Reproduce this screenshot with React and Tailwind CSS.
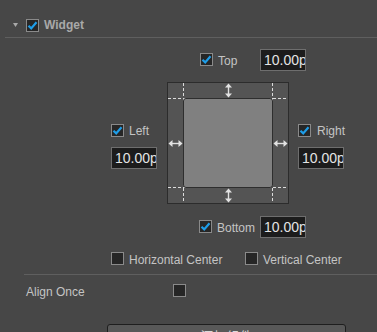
import React from "react"

function Check({ checked }) {
    return (
        <span className="w-[13px] h-[13px] shrink-0 border border-[#8a8a8a] bg-[#262626] flex items-center justify-center">
            {checked && (
                <svg width="11" height="11" viewBox="0 0 11 11">
                    <path d="M1.5 5.8 L4.2 8.4 L9.5 2.3" fill="none" stroke="#1e9de8" strokeWidth="2.2" />
                </svg>
            )}
        </span>
    )
}

function ValueBox() {
    return (
        <div className="w-[46px] h-[22px] border border-[#6e6e6e] bg-[#1c1c1c] overflow-hidden flex items-center pl-[3px] text-[14px] text-[#e4e4e4] whitespace-nowrap leading-none">
            10.00px
        </div>
    )
}

function Label({ children }) {
    return <span className="text-[12px] text-[#c4c4c4] leading-none whitespace-nowrap">{children}</span>
}

function Diagram() {
    const dash = { stroke: "#dcdcdc", strokeWidth: 1, strokeDasharray: "3 2" }
    return (
        <div className="relative w-[122px] h-[122px] border border-[#2c2c2c] bg-[#545454] p-[15px]">
            <svg className="absolute inset-0" width="120" height="120" viewBox="0 0 120 120">
                <line x1="15.5" y1="0" x2="15.5" y2="120" {...dash} />
                <line x1="104.5" y1="0" x2="104.5" y2="120" {...dash} />
                <line x1="0" y1="15.5" x2="120" y2="15.5" {...dash} />
                <line x1="0" y1="104.5" x2="120" y2="104.5" {...dash} />
                <g fill="#e2e2e2" stroke="#e2e2e2">
                    <line x1="60.5" y1="3" x2="60.5" y2="12" strokeWidth="1.4" />
                    <path d="M57 4.5 L60.5 0.5 L64 4.5 Z" stroke="none" />
                    <path d="M57 10.5 L60.5 14.5 L64 10.5 Z" stroke="none" />
                    <line x1="60.5" y1="108" x2="60.5" y2="117" strokeWidth="1.4" />
                    <path d="M57 109.5 L60.5 105.5 L64 109.5 Z" stroke="none" />
                    <path d="M57 115.5 L60.5 119.5 L64 115.5 Z" stroke="none" />
                    <line x1="3" y1="60.5" x2="12" y2="60.5" strokeWidth="1.4" />
                    <path d="M4.5 57 L0.5 60.5 L4.5 64 Z" stroke="none" />
                    <path d="M10.5 57 L14.5 60.5 L10.5 64 Z" stroke="none" />
                    <line x1="108" y1="60.5" x2="117" y2="60.5" strokeWidth="1.4" />
                    <path d="M109.5 57 L105.5 60.5 L109.5 64 Z" stroke="none" />
                    <path d="M115.5 57 L119.5 60.5 L115.5 64 Z" stroke="none" />
                </g>
            </svg>
            <div className="relative w-full h-full bg-[#808080] border border-[#2e2e2e] rounded-[3px]" />
        </div>
    )
}

export default function App() {
    return (
        <div className="w-[377px] h-[332px] overflow-hidden bg-[#474747] font-['Liberation_Sans',Arial,sans-serif]">
            {/* header */}
            <div className="flex items-center h-[14px] mt-[18px] pl-[13px]">
                <svg width="5" height="4" viewBox="0 0 5 4" className="mr-[8px]">
                    <path d="M0 0 L5 0 L2.5 4 Z" fill="#a8a8a8" />
                </svg>
                <Check checked />
                <span className="ml-[5px] text-[12px] font-bold text-[#a9a9a9] leading-none">Widget</span>
            </div>
            <div className="ml-[5px] mt-[5px] border-t border-[#5f5f5f]" />

            {/* top */}
            <div className="flex items-center h-[23px] mt-[10px] pl-[200px]">
                <Check checked />
                <span className="ml-[5px] w-[42px]"><Label>Top</Label></span>
                <ValueBox />
            </div>

            {/* middle */}
            <div className="flex items-center mt-[11px] pl-[111px]">
                <div className="flex flex-col w-[46px] gap-[5px] mt-[1px]">
                    <div className="flex items-center">
                        <Check checked />
                        <span className="ml-[5px]"><Label>Left</Label></span>
                    </div>
                    <ValueBox />
                </div>
                <div className="ml-[10px]">
                    <Diagram />
                </div>
                <div className="flex flex-col w-[47px] gap-[5px] ml-[9px] mt-[1px]">
                    <div className="flex items-center">
                        <Check checked />
                        <span className="ml-[6px]"><Label>Right</Label></span>
                    </div>
                    <ValueBox />
                </div>
            </div>

            {/* bottom */}
            <div className="flex items-center h-[23px] mt-[11px] pl-[199px]">
                <Check checked />
                <span className="ml-[5px] w-[43px]"><Label>Bottom</Label></span>
                <ValueBox />
            </div>

            {/* centers */}
            <div className="flex items-center h-[13px] mt-[14px] pl-[111px]">
                <Check />
                <span className="ml-[5px] w-[116px]"><Label>Horizontal Center</Label></span>
                <Check />
                <span className="ml-[5px]"><Label>Vertical Center</Label></span>
            </div>
            <div className="ml-[24px] mt-[9px] border-t border-[#5f5f5f]" />

            {/* align once */}
            <div className="flex items-center h-[13px] mt-[9px] pl-[26px]">
                <span className="w-[147px]"><Label>Align Once</Label></span>
                <Check />
            </div>

            {/* add component */}
            <div className="mt-[27px] ml-[107px] w-[239px] h-[26px] border border-[#1e1e1e] bg-[#585858] rounded-[3px] flex items-center justify-center text-[13px] text-[#d8d8d8] font-['Liberation_Sans','Noto_Sans_CJK_SC',sans-serif]">
                添加组件
            </div>
        </div>
    )
}
